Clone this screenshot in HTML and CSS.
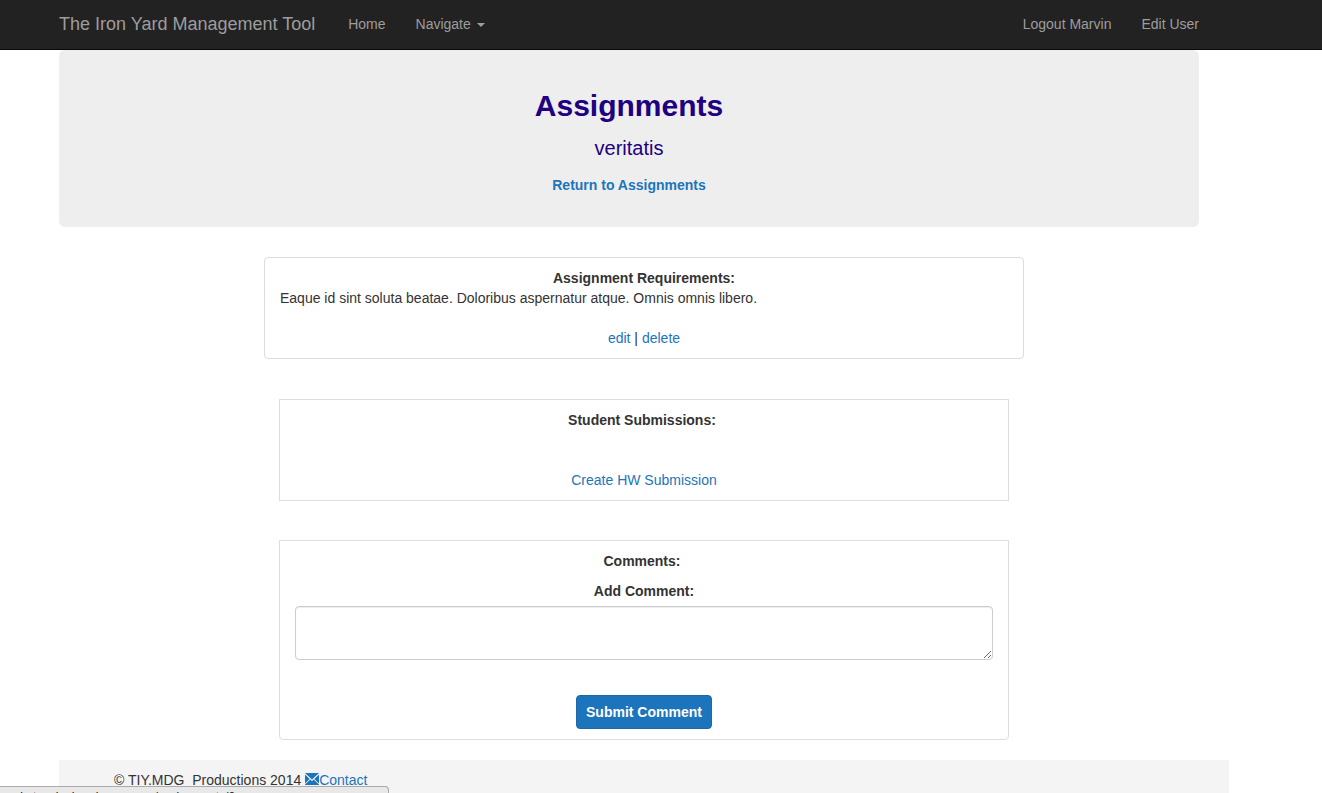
FILE: index.html
```html
<!DOCTYPE html>
<html lang="en">
<head>
<meta charset="utf-8">
<meta name="viewport" content="width=device-width, initial-scale=1">
<title>The Iron Yard Management Tool</title>
<link rel="stylesheet" href="styles.css">
</head>
<body>
<nav class="navbar">
  <div class="container navbar-inner">
    <a class="brand" href="#">The Iron Yard Management Tool</a>
    <a class="nav-link" href="#">Home</a>
    <button class="nav-link nav-toggle" type="button">Navigate <span class="caret"></span></button>
    <div class="nav-right">
      <a class="nav-link" href="#">Logout Marvin</a>
      <a class="nav-link" href="#">Edit User</a>
    </div>
  </div>
</nav>
<main class="container">
  <header class="jumbotron">
    <h1 class="title">Assignments</h1>
    <p class="subtitle">veritatis</p>
    <a class="return" href="#">Return to Assignments</a>
  </header>
  <div class="column">
    <section class="card card-rounded">
      <h2 class="heading">Assignment Requirements:</h2>
      <p class="requirements">Eaque id sint soluta beatae. Doloribus aspernatur atque. Omnis omnis libero.</p>
      <p class="actions"><a href="#">edit</a> | <a href="#">delete</a></p>
    </section>
    <section class="card card-inset submissions">
      <h2 class="heading heading-inline">Student Submissions:</h2>
      <a href="#">Create HW Submission</a>
    </section>
    <section class="card card-inset comments">
      <h2 class="heading heading-inline">Comments:</h2>
      <form class="comment-form">
        <label class="comment-label" for="comment">Add Comment:</label>
        <textarea class="comment-input" id="comment" rows="2"></textarea>
        <button class="submit" type="button">Submit Comment</button>
      </form>
    </section>
  </div>
</main>
<div class="footer-wrap">
  <footer class="footer">
    <span>© TIY.MDG_Productions 2014</span>
    <a class="contact" href="#"><svg class="mail" viewBox="0 0 14 12" aria-hidden="true"><path d="M0 0h14L7 6.6zM0 1.4 4.7 6 0 10.4zM14 1.4v9L9.3 6zM5.4 6.6 7 8.2l1.6-1.6L14 11.6V12H0v-.4z"/></svg>Contact</a>
  </footer>
</div>
<div class="status">pocket-webs.herokuapp.com/assignments/8</div>
</body>
</html>
```
FILE: styles.css
```css
* { box-sizing: border-box; }
html { height: 100%; overflow: hidden; }
body {
  margin: 0;
  height: 100%;
  overflow: hidden;
  font: 14px/20px "Liberation Sans", Arial, sans-serif;
  color: #333;
  background: #fff;
}
h1, h2, p { margin: 0; }
a { color: #1c75bc; text-decoration: none; }
.container {
  width: calc(100% - 152px);
  max-width: 1170px;
  margin-left: 44px;
  padding: 0 15px;
}
.navbar { background: #222; border-bottom: 1px solid #080808; }
.navbar-inner { display: flex; align-items: center; height: 49px; padding-bottom: 2px; }
.brand { margin-right: 18px; font-size: 18px; color: #9d9d9d; }
.nav-link { padding: 0 15px; font: inherit; color: #9d9d9d; }
.nav-toggle { display: flex; align-items: center; gap: 6px; border: 0; background: none; }
.caret { margin-top: 2px; border: 4px solid transparent; border-top-color: currentColor; border-bottom: 0; }
.nav-right { display: flex; margin-left: auto; margin-right: -15px; }
.jumbotron {
  padding: 39px 60px 32px;
  border-radius: 6px;
  background: #eee;
  text-align: center;
  color: #200080;
}
.title { font-size: 30px; line-height: 34px; }
.subtitle { margin: 10px 0 12px; font-size: 20px; line-height: 30px; }
.return { display: block; font-weight: bold; }
.column { width: calc(100% * 2 / 3); margin: 30px 0 0 calc(100% / 6 + 15px); }
.card { padding: 10px 15px; border: 1px solid #ddd; text-align: center; }
.card-rounded { border-radius: 4px; }
.card-inset { margin: 40px 15px 0; }
.heading { font-size: 14px; line-height: 20px; }
.heading-inline { padding-right: 4px; }
.requirements { text-align: left; }
.actions { margin-top: 20px; }
.submissions .heading { margin-bottom: 40px; }
.comments { margin-top: 39px; border-radius: 0 0 4px 4px; }
.comment-form { display: flex; flex-direction: column; align-items: center; }
.comment-label { margin: 10px 0 5px; font-weight: bold; }
.comment-input {
  display: block;
  width: 100%;
  height: 54px;
  margin-bottom: 35px;
  padding: 6px 12px;
  border: 1px solid #ccc;
  border-radius: 4px;
  box-shadow: inset 0 1px 1px rgba(0, 0, 0, .075);
  font: inherit;
}
.submit {
  padding: 6px 9px;
  border: 1px solid #1b69a8;
  border-radius: 4px;
  background: #1c75bc;
  color: #fff;
  font: inherit;
  font-weight: bold;
}
.footer-wrap {
  width: calc(100% - 152px);
  max-width: 1170px;
  margin: 20px 0 0 59px;
}
.footer { padding: 10px 55px 20px; background: #f4f4f4; }
.mail { width: 14px; height: 12px; fill: #1c75bc; }
.status {
  position: fixed;
  left: 0;
  bottom: -13px;
  width: 389px;
  height: 20px;
  padding: 3px 1px;
  border: 1px solid #aaa;
  border-left: 0;
  border-top-right-radius: 4px;
  background: #e8e8e8;
  color: #111;
  font-size: 12px;
  line-height: 14px;
}
```
